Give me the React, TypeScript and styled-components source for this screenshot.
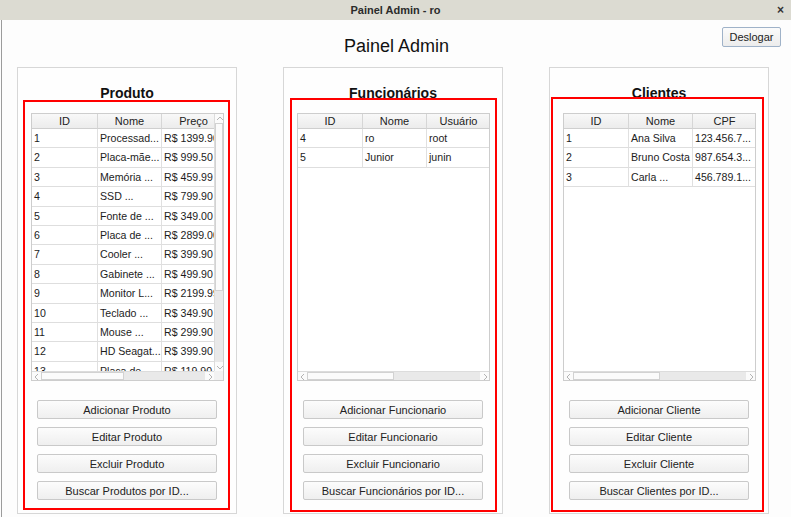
import styled, { createGlobalStyle } from "styled-components";

const GlobalStyle = createGlobalStyle`
  html, body {
    margin: 0;
    padding: 0;
    background: #fdfdfd;
  }
  body {
    font-family: "Liberation Sans", Arial, sans-serif;
    color: #1f1f1f;
    width: 791px;
    height: 517px;
    overflow: hidden;
  }
  * {
    box-sizing: border-box;
  }
`;

type Column = { title: string; width: number };
type Section = {
  title: string;
  columns: Column[];
  rows: string[][];
  actions: string[];
  vertical: boolean;
  thumb: number;
  mark: { top: number; left: number; right: number; bottom: number };
};

const sections: Section[] = [
  {
    title: "Produto",
    columns: [
      { title: "ID", width: 66 },
      { title: "Nome", width: 64 },
      { title: "Preço", width: 64 },
    ],
    rows: [
      ["1", "Processad...", "R$ 1399.90"],
      ["2", "Placa-mãe...", "R$ 999.50"],
      ["3", "Memória ...", "R$ 459.99"],
      ["4", "SSD ...", "R$ 799.90"],
      ["5", "Fonte de ...", "R$ 349.00"],
      ["6", "Placa de ...", "R$ 2899.00"],
      ["7", "Cooler ...", "R$ 399.90"],
      ["8", "Gabinete ...", "R$ 499.90"],
      ["9", "Monitor L...", "R$ 2199.99"],
      ["10", "Teclado ...", "R$ 349.90"],
      ["11", "Mouse ...", "R$ 299.90"],
      ["12", "HD Seagat...", "R$ 399.90"],
      ["13", "Placa de ...", "R$ 119.90"],
    ],
    actions: [
      "Adicionar Produto",
      "Editar Produto",
      "Excluir Produto",
      "Buscar Produtos por ID...",
    ],
    vertical: true,
    thumb: 83,
    mark: { top: 32, left: 5, right: 6, bottom: 3 },
  },
  {
    title: "Funcionários",
    columns: [
      { title: "ID", width: 65 },
      { title: "Nome", width: 64 },
      { title: "Usuário", width: 64 },
    ],
    rows: [
      ["4", "ro", "root"],
      ["5", "Junior", "junin"],
    ],
    actions: [
      "Adicionar Funcionario",
      "Editar Funcionario",
      "Excluir Funcionario",
      "Buscar Funcionários por ID...",
    ],
    vertical: false,
    thumb: 87,
    mark: { top: 30, left: 6, right: 5, bottom: 1 },
  },
  {
    title: "Clientes",
    columns: [
      { title: "ID", width: 65 },
      { title: "Nome", width: 64 },
      { title: "CPF", width: 64 },
    ],
    rows: [
      ["1", "Ana Silva", "123.456.7..."],
      ["2", "Bruno Costa", "987.654.3..."],
      ["3", "Carla ...", "456.789.1..."],
    ],
    actions: [
      "Adicionar Cliente",
      "Editar Cliente",
      "Excluir Cliente",
      "Buscar Clientes por ID...",
    ],
    vertical: false,
    thumb: 87,
    mark: { top: 29, left: 1, right: 4, bottom: 1 },
  },
];

const Window = styled.div`
  display: flex;
  flex-direction: column;
  width: 791px;
  height: 517px;
`;

const TitleBar = styled.div`
  height: 20px;
  flex: none;
  display: grid;
  grid-template-columns: 1fr auto 1fr;
  align-items: center;
  background: #dcdbd2;
  font-size: 11px;
  font-weight: 700;
  color: #2b2b2b;
`;

const WindowTitle = styled.span`
  grid-column: 2;
`;

const CloseMark = styled.span`
  grid-column: 3;
  justify-self: end;
  margin-right: 7px;
  font-size: 12px;
  font-weight: 700;
  color: #333;
`;

const Body = styled.div`
  flex: 1;
  margin-left: 1px;
  border-left: 1px solid #9c9c9c;
  display: flex;
  flex-direction: column;
`;

const Header = styled.div`
  height: 47px;
  flex: none;
  display: grid;
  grid-template-columns: 1fr auto 1fr;
`;

const Heading = styled.h1`
  grid-column: 2;
  margin: 0;
  padding-top: 15px;
  font-size: 18px;
  line-height: 22px;
  font-weight: 400;
  color: #111;
`;

const LogoutButton = styled.button`
  grid-column: 3;
  justify-self: end;
  align-self: start;
  margin: 7px 10px 0 0;
  width: 59px;
  height: 20px;
  padding: 0;
  font-family: inherit;
  font-size: 11px;
  color: #222;
  background: linear-gradient(#fbfbfb, #ececec);
  border: 1px solid #9fb2c8;
  border-radius: 2px;
`;

const PanelsRow = styled.div`
  display: flex;
  gap: 46px;
  padding-left: 15px;
`;

const Panel = styled.section`
  position: relative;
  width: 220px;
  height: 447px;
  border: 1px solid #d7d7d7;
  background: #fefefe;
  padding: 0 13px;
  display: flex;
  flex-direction: column;
`;

const PanelTitle = styled.h2`
  margin: 16px 0 11px;
  height: 18px;
  font-size: 14px;
  line-height: 18px;
  font-weight: 700;
  text-align: center;
  color: #111;
`;

const Mark = styled.div<{ $top: number; $left: number; $right: number; $bottom: number }>`
  position: absolute;
  top: ${(p) => p.$top}px;
  left: ${(p) => p.$left}px;
  right: ${(p) => p.$right}px;
  bottom: ${(p) => p.$bottom}px;
  border: 2px solid #f00;
  pointer-events: none;
`;

const TableFrame = styled.div<{ $vertical: boolean }>`
  width: 193px;
  height: 268px;
  border: 1px solid #cdcdcd;
  background: #fff;
  display: grid;
  grid-template-columns: ${(p) => (p.$vertical ? "1fr 9px" : "1fr")};
  grid-template-rows: 1fr 9px;
  overflow: hidden;
`;

const Viewport = styled.div`
  overflow: hidden;
  min-width: 0;
`;

const Row = styled.div<{ $template: string }>`
  display: grid;
  grid-template-columns: ${(p) => p.$template};
  width: max-content;
`;

const HeadCell = styled.div`
  height: 15px;
  line-height: 14px;
  font-size: 11px;
  text-align: center;
  color: #222;
  background: linear-gradient(#f8f8f8, #ececec);
  border-right: 1px solid #d6d6d6;
  border-bottom: 1px solid #cfcfcf;
  white-space: nowrap;
  overflow: hidden;
`;

const Cell = styled.div`
  height: 19.4px;
  line-height: 18px;
  font-size: 10.6px;
  padding-left: 2px;
  color: #1c1c1c;
  border-right: 1px solid #e0e0e0;
  border-bottom: 1px solid #dedede;
  white-space: nowrap;
  overflow: hidden;
`;

const VScroll = styled.div`
  display: flex;
  flex-direction: column;
  border-left: 1px solid #dcdcdc;
  background: #e9e9e9;
`;

const HScroll = styled.div`
  display: flex;
  border-top: 1px solid #dcdcdc;
  background: #e9e9e9;
`;

const Arrow = styled.div`
  flex: none;
  width: 9px;
  height: 9px;
  display: flex;
  align-items: center;
  justify-content: center;
  background: #fbfbfb;
`;

const Thumb = styled.div<{ $size: number; $axis: "x" | "y" }>`
  flex: none;
  ${(p) => (p.$axis === "x" ? `width: ${p.$size}px;` : `height: ${p.$size}px;`)}
  background: #fbfbfb;
  border: 1px solid #d2d2d2;
`;

const Track = styled.div`
  flex: 1;
`;

const Corner = styled.div`
  background: #f2f2f2;
`;

const ButtonStack = styled.div`
  margin: 19px 6px 0;
  display: flex;
  flex-direction: column;
  gap: 8px;
`;

const ActionButton = styled.button`
  height: 19px;
  padding: 0;
  font-family: inherit;
  font-size: 11px;
  color: #222;
  background: linear-gradient(#fcfcfc, #efefef);
  border: 1px solid #c9c9c9;
  border-radius: 2px;
`;

function Tri({ dir }: { dir: "up" | "down" | "left" | "right" }) {
  const pts = {
    up: "1,5 4,2 7,5",
    down: "1,3 4,6 7,3",
    left: "5,1 2,4 5,7",
    right: "3,1 6,4 3,7",
  }[dir];
  return (
    <svg width="8" height="8" viewBox="0 0 8 8">
      <polyline points={pts} fill="none" stroke="#b4b4b4" strokeWidth="1" />
    </svg>
  );
}

function DataTable({ section }: { section: Section }) {
  const template = section.columns.map((c) => `${c.width}px`).join(" ");
  return (
    <TableFrame $vertical={section.vertical}>
      <Viewport>
        <Row $template={template}>
          {section.columns.map((c) => (
            <HeadCell key={c.title}>{c.title}</HeadCell>
          ))}
        </Row>
        {section.rows.map((r) => (
          <Row $template={template} key={r[0]}>
            {r.map((v, i) => (
              <Cell key={i}>{v}</Cell>
            ))}
          </Row>
        ))}
      </Viewport>
      {section.vertical && (
        <VScroll>
          <Arrow>
            <Tri dir="up" />
          </Arrow>
          <Thumb $axis="y" $size={168} />
          <Track />
          <Arrow>
            <Tri dir="down" />
          </Arrow>
        </VScroll>
      )}
      <HScroll>
        <Arrow>
          <Tri dir="left" />
        </Arrow>
        <Thumb $axis="x" $size={section.thumb} />
        <Track />
        <Arrow>
          <Tri dir="right" />
        </Arrow>
      </HScroll>
      {section.vertical && <Corner />}
    </TableFrame>
  );
}

export default function App() {
  return (
    <>
      <GlobalStyle />
      <Window>
        <TitleBar>
          <WindowTitle>Painel Admin - ro</WindowTitle>
          <CloseMark>×</CloseMark>
        </TitleBar>
        <Body>
          <Header>
            <Heading>Painel Admin</Heading>
            <LogoutButton>Deslogar</LogoutButton>
          </Header>
          <PanelsRow>
            {sections.map((s) => (
              <Panel key={s.title}>
                <PanelTitle>{s.title}</PanelTitle>
                <DataTable section={s} />
                <ButtonStack>
                  {s.actions.map((a) => (
                    <ActionButton key={a}>{a}</ActionButton>
                  ))}
                </ButtonStack>
                <Mark
                  $top={s.mark.top}
                  $left={s.mark.left}
                  $right={s.mark.right}
                  $bottom={s.mark.bottom}
                />
              </Panel>
            ))}
          </PanelsRow>
        </Body>
      </Window>
    </>
  );
}
